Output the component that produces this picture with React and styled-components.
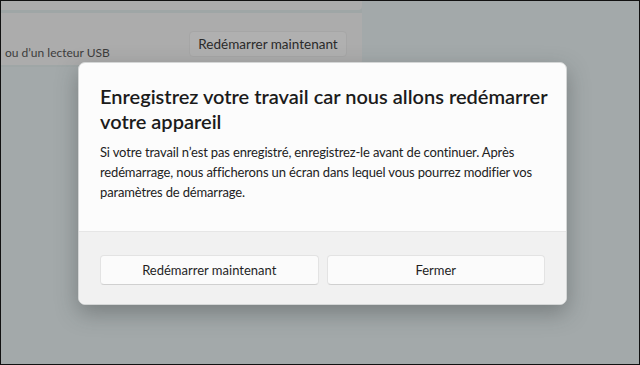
import React from 'react'
import styled, { createGlobalStyle } from 'styled-components'

const GlobalStyle = createGlobalStyle`
    html, body {
        margin: 0;
        padding: 0;
        background: #a3a9aa;
    }
    * {
        box-sizing: border-box;
    }
`

function App() {
    return (
        <>
            <GlobalStyle />
            <Screen>
                <SettingsColumn>
                    <Card height={9} />
                    <Card height={52}>
                        <CardText>ou d’un lecteur USB</CardText>
                        <GhostButton>Redémarrer maintenant</GhostButton>
                    </Card>
                </SettingsColumn>

                <Dialog>
                    <DialogBody>
                        <Title>Enregistrez votre travail car nous allons redémarrer votre appareil</Title>
                        <Message>
                            Si votre travail n’est pas enregistré, enregistrez-le avant de continuer. Après
                            redémarrage, nous afficherons un écran dans lequel vous pourrez modifier vos
                            paramètres de démarrage.
                        </Message>
                    </DialogBody>
                    <Footer>
                        <Button>Redémarrer maintenant</Button>
                        <Button>Fermer</Button>
                    </Footer>
                </Dialog>
            </Screen>
        </>
    )
}

export default App

const Screen = styled.div`
    position: relative;
    width: 640px;
    height: 365px;
    overflow: hidden;
    border: 1px solid #111;
    background: #a3a9aa;
    font-family: "Lato", "Noto Sans", sans-serif;
`
const SettingsColumn = styled.div`
    width: 361px;
    display: flex;
    flex-direction: column;
    gap: 3px;
    background: #9fa6a6;
    padding-bottom: 2px;
`
const Card = styled.div`
    height: ${props => props.height}px;
    background: #acacac;
    border-radius: 0 0 4px 0;
    display: flex;
    align-items: flex-end;
    justify-content: space-between;
    padding: 0 15px 4px 4px;
`
const CardText = styled.span`
    font-size: 12px;
    color: #3c3c3c;
    padding-bottom: 1px;
`
const GhostButton = styled.div`
    align-self: flex-start;
    margin-top: 18px;
    width: 158px;
    height: 26px;
    border-radius: 4px;
    background: #b0b0b0;
    border: 1px solid #a6a6a6;
    display: flex;
    align-items: center;
    justify-content: center;
    font-size: 13.5px;
    color: #2a2a2a;
`
const Dialog = styled.div`
    position: absolute;
    left: 77px;
    top: 61px;
    width: 489px;
    height: 243px;
    border-radius: 7px;
    overflow: hidden;
    background: #fcfcfc;
    border: 1px solid #d4d6d6;
    box-shadow: 0 8px 22px rgba(40, 45, 45, 0.35);
    display: flex;
    flex-direction: column;
`
const DialogBody = styled.div`
    flex: 1;
    padding: 21px 18px 0 21px;
`
const Title = styled.h1`
    margin: 0;
    font-size: 20px;
    line-height: 25px;
    font-weight: 600;
    color: #1b1b1b;
    width: 448px;
`
const Message = styled.p`
    margin: 8px 0 0;
    font-size: 13px;
    letter-spacing: -0.15px;
    line-height: 20px;
    color: #222;
    width: 448px;
`
const Footer = styled.div`
    height: 73px;
    background: #f1f1f1;
    border-top: 1px solid #e6e6e6;
    display: grid;
    grid-template-columns: 1fr 1fr;
    gap: 8px;
    padding: 23px 21px 0 21px;
    align-items: start;
`
const Button = styled.div`
    height: 30px;
    border-radius: 4px;
    background: #fbfbfb;
    border: 1px solid #e3e3e3;
    border-bottom-color: #d0d0d0;
    display: flex;
    align-items: center;
    justify-content: center;
    font-size: 13px;
    color: #1f1f1f;
`
